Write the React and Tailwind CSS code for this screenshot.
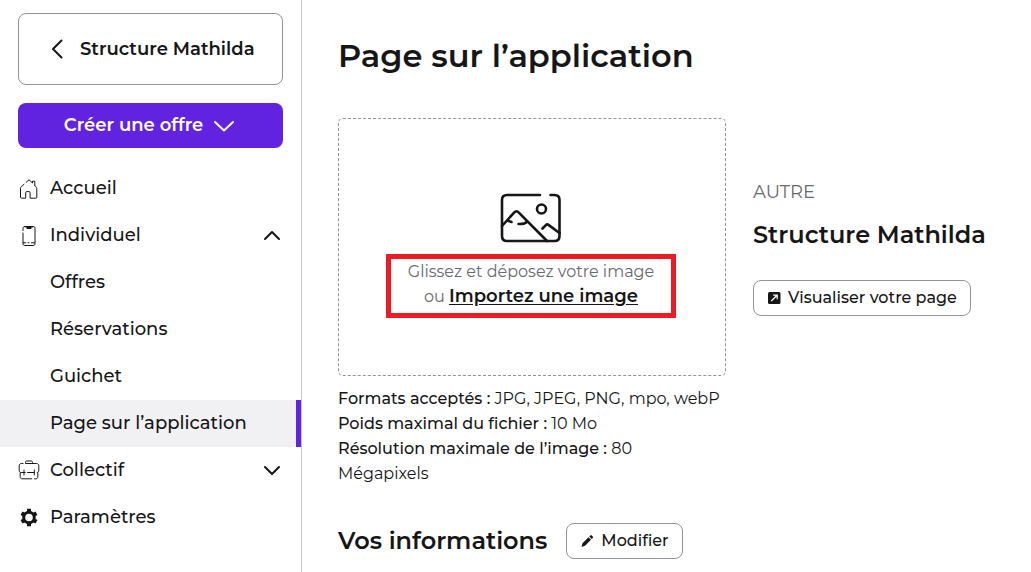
import { useState } from "react";
import clsx from "clsx";

const iconProps = {
  fill: "none",
  stroke: "currentColor",
  strokeLinecap: "round",
  strokeLinejoin: "round",
  "aria-hidden": true,
};

function Chevron({ d, width, height, strokeWidth = 2 }) {
  return (
    <svg
      {...iconProps}
      width={width}
      height={height}
      viewBox={`0 0 ${width} ${height}`}
      strokeWidth={strokeWidth}
    >
      <path d={d} />
    </svg>
  );
}

function HomeIcon() {
  return (
    <svg {...iconProps} width="22" height="22" viewBox="0 0 22 22" strokeWidth="1">
      <path d="M8.2 4.3 11 1.8l3 2.7M6 6.3 3.4 8.6c-.6.5-.9 1.2-.9 2v8.6c0 .6.4 1 1 1h4.2v-5.6c0-.6.4-1 1-1h2.4c.6 0 1 .4 1 1v5.6h5.7c.6 0 1-.4 1-1v-8.6c0-.8-.3-1.5-.9-2L16.6 7.4M14.5 4.8V3.2h2.300v4" />
    </svg>
  );
}

function PhoneIcon() {
  return (
    <svg {...iconProps} width="22" height="22" viewBox="0 0 22 22" strokeWidth="1">
      <path d="M5 8v10.500c0 1.400.6 2 2 2h8c1.400 0 2-.6 2-2V3.500c0-1.400-.6-2-2-2H7c-1.400 0-2 .6-2 2V5.500M5.200 17.800h2.600M10 17.800h1M13.500 17.800h3.300" />
      <path d="M7.500 1.700h7M9.300 3.200h3.500" strokeWidth="1.600" />
    </svg>
  );
}

function BriefcaseIcon() {
  return (
    <svg {...iconProps} width="22" height="22" viewBox="0 0 22 22" strokeWidth="1">
      <path d="M5 3.500H3.500c-1.500 0-2.300.8-2.300 2.300v4.700c0 1.200.6 2 1.600 2M8 3.500h10.500c1.500 0 2.300.8 2.300 2.300v4.700c0 1.200-.6 2-1.600 2M7.500 3.300V2.500c0-1 .5-1.500 1.500-1.500h4c1 0 1.500.5 1.500 1.500v.8M2.200 13v3.700c0 1.400.7 2.100 2.100 2.100h9.500M16.500 18.800h1.200c1.400 0 2.100-.7 2.100-2.100V13M3.500 12.500h3.700M9.500 12.500h6.500M6 10v5M16.300 10v5" />
    </svg>
  );
}

function GearIcon() {
  return (
    <svg width="22" height="22" viewBox="0 0 22 22" fill="none" stroke="currentColor" aria-hidden="true">
      <circle cx="11" cy="10.500" r="5.300" strokeWidth="3" />
      <path
        d="M11 1.800v3M11 16.200v3M3.500 6.200l2.500 1.400M16 13.400l2.500 1.400M3.500 14.800 6 13.400M16 7.600l2.500-1.400"
        strokeWidth="4"
      />
    </svg>
  );
}

function PictureIcon() {
  return (
    <svg {...iconProps} width="62" height="50" viewBox="0 0 62 50" strokeWidth="2.600">
      <path d="M40 2H7C3.800 2 2 3.800 2 7v36c0 3.200 1.800 5 5 5h47.500c3.200 0 5-1.800 5-5V7c0-3.200-1.800-5-5-5H50.500" />
      <path d="M2 33 14.300 19.300c1.400-1.500 2.900-1.500 4.300 0L47 48M7 27.500l4.500 1.500M18.500 31c4 .3 6.800-.5 9-2.500M42.500 35.500l3.400-3.400c.9-.9 1.900-.9 2.900 0L59.500 40" />
      <circle cx="41.500" cy="16" r="4.500" />
    </svg>
  );
}

function OpenIcon() {
  return (
    <svg width="14" height="14" viewBox="0 0 14 14" aria-hidden="true">
      <rect x="1" y="1" width="12.500" height="12" rx="1.500" fill="currentColor" />
      <path d="m4.300 10 5.500-5.500M6.200 4.200h4v4" fill="none" stroke="white" strokeWidth="1.200" />
    </svg>
  );
}

function PencilIcon() {
  return (
    <svg width="14" height="14" viewBox="0 0 14 14" fill="currentColor" aria-hidden="true">
      <path d="M1.500 13l1-3.700 6-6 2.500 2.500-6 6zM9.300 2.600l1-1c.5-.5 1-.5 1.500 0l.9.900c.5.500.5 1 0 1.500l-1 1z" />
    </svg>
  );
}

const individualLinks = [
  { label: "Offres" },
  { label: "Réservations" },
  { label: "Guichet" },
  { label: "Page sur l’application", active: true },
];

const rowClass = "flex h-[47px] w-full items-center gap-[10px] pl-[18px] text-left";

function SectionButton({ icon, label, open, onClick }) {
  return (
    <button type="button" aria-expanded={open} onClick={onClick} className={clsx(rowClass, "pr-5")}>
      {icon}
      <span className="grow">{label}</span>
      <Chevron width={18} height={12} d={open ? "M2 9 9 2l7 7" : "M2 2l7 7 7-7"} />
    </button>
  );
}

function Sidebar() {
  const [individualOpen, setIndividualOpen] = useState(true);
  const [groupOpen, setGroupOpen] = useState(false);

  return (
    <aside className="w-[302px] shrink-0 border-r border-[#c8c8cc] pt-[13px]">
      <div className="flex flex-col gap-[18px] px-[18px]">
        <button
          type="button"
          className="flex h-[72px] items-center gap-4 rounded-lg border border-[#90949d] pl-8 text-[18px] font-semibold"
        >
          <Chevron width={13} height={20} d="M10.500 1.500 2 10l8.500 8.500" />
          Structure Mathilda
        </button>
        <button
          type="button"
          className="flex h-[45px] items-center justify-center gap-[10px] rounded-lg bg-[#6123df] pr-[2px] text-[18px] font-semibold text-white"
        >
          Créer une offre
          <Chevron width={22} height={12} d="M2 2l9 8.500L20 2" />
        </button>
      </div>

      <nav className="mt-[17px] text-[18px] font-medium">
        <a href="#accueil" className={rowClass}>
          <HomeIcon />
          Accueil
        </a>
        <SectionButton
          icon={<PhoneIcon />}
          label="Individuel"
          open={individualOpen}
          onClick={() => setIndividualOpen(!individualOpen)}
        />
        {individualOpen &&
          individualLinks.map((link) => (
            <a
              key={link.label}
              href="#individuel"
              aria-current={link.active ? "page" : undefined}
              className={clsx(
                "flex h-[47px] items-center pl-[50px]",
                link.active && "border-r-5 border-[#6123df] bg-[#f1f1f4]"
              )}
            >
              {link.label}
            </a>
          ))}
        <SectionButton
          icon={<BriefcaseIcon />}
          label="Collectif"
          open={groupOpen}
          onClick={() => setGroupOpen(!groupOpen)}
        />
        <a href="#parametres" className={rowClass}>
          <GearIcon />
          Paramètres
        </a>
      </nav>
    </aside>
  );
}

function OutlineButton({ children }) {
  return (
    <button
      type="button"
      className="flex h-9 items-center gap-[7px] rounded-lg border border-[#90949d] px-[13px] text-[16px] font-medium whitespace-nowrap"
    >
      {children}
    </button>
  );
}

export default function App() {
  return (
    <div className="flex min-h-screen bg-white font-['Montserrat','Inter',sans-serif] text-[#161617]">
      <Sidebar />
      <main className="grow pt-9 pl-9">
        <h1 className="text-[32px] leading-10 font-semibold">Page sur l’application</h1>

        <div className="mt-[42px] flex gap-[27px]">
          <section className="w-[388px] shrink-0">
            <div className="flex h-[258px] flex-col items-center gap-[11px] rounded-[5px] border border-dashed border-[#90949d] pt-[74px] pr-[2px]">
              <PictureIcon />
              <div className="w-[290px] border-5 border-[#ed1c24] pb-1 text-center text-[16px] leading-[25px] text-[#696a6f]">
                <p>Glissez et déposez votre image</p>
                <p>
                  ou{" "}
                  <button
                    type="button"
                    className="text-[18px] font-semibold text-[#161617] underline underline-offset-2"
                  >
                    Importez une image
                  </button>
                </p>
              </div>
            </div>
            <ul className="mt-[10px] text-[16px] leading-[25px]">
              <li>
                <strong className="font-medium">Formats acceptés :</strong> JPG, JPEG, PNG, mpo, webP
              </li>
              <li>
                <strong className="font-medium">Poids maximal du fichier :</strong> 10 Mo
              </li>
              <li>
                <strong className="font-medium">Résolution maximale de l’image :</strong> 80 Mégapixels
              </li>
            </ul>
          </section>

          <section className="pt-[60px]">
            <p className="text-[18px] leading-7 text-[#696a6f]">AUTRE</p>
            <h2 className="mt-[11px] mb-[27px] text-[24px] leading-9 font-semibold whitespace-nowrap">
              Structure Mathilda
            </h2>
            <OutlineButton>
              <OpenIcon />
              Visualiser votre page
            </OutlineButton>
          </section>
        </div>

        <div className="mt-[37px] flex items-center gap-[19px]">
          <h2 className="text-[24px] leading-9 font-semibold">Vos informations</h2>
          <OutlineButton>
            <PencilIcon />
            Modifier
          </OutlineButton>
        </div>
      </main>
    </div>
  );
}
